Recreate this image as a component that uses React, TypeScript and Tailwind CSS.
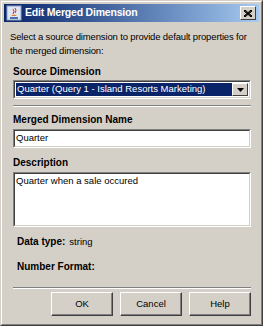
export default function App() {
  return (
    <div className="h-[327px] w-[265px] bg-white font-['Liberation_Sans',Arial,sans-serif] text-black">
      <div className="flex h-[326px] w-[263px] flex-col border border-t-[#d4d0c8] border-l-[#d4d0c8] border-r-[#404040] border-b-[#404040] bg-[#d4d0c8]">
        <div className="flex flex-1 flex-col border border-t-white border-l-white border-r-[#808080] border-b-[#808080] p-[2px]">
          {/* title bar */}
          <div className="flex h-[18px] items-center bg-gradient-to-r from-[#0a246a] to-[#a6caf0] pl-[2px] pr-[2px]">
            <svg width="16" height="16" viewBox="0 0 16 16" className="mr-[3px]">
              <rect x="1" y="1" width="14" height="14" fill="#dfe6f2" stroke="#8da2c4" />
              <path d="M4 12 h8 v2 h-8z" fill="#4a6fb3" />
              <path d="M5 11 q3 -3 6 0z" fill="#e07a2f" />
              <path d="M7 4 q2 2 0 5 M9 3 q2 2 0 5" stroke="#c33" strokeWidth="1" fill="none" />
            </svg>
            <span className="text-[10.5px] font-bold tracking-[-0.2px] text-white">Edit Merged Dimension</span>
            <div className="ml-auto mr-[1px] flex h-[14px] w-[16px] items-center justify-center border border-t-white border-l-white border-r-[#404040] border-b-[#404040] bg-[#d4d0c8]">
              <svg width="8" height="7" viewBox="0 0 8 7">
                <path d="M0 0 L8 7 M8 0 L0 7 M1 0 L8 6 M0 1 L7 7 M7 0 L0 6 M8 1 L1 7" stroke="black" strokeWidth="1" />
              </svg>
            </div>
          </div>

          <div className="flex flex-1 flex-col px-[6px]">
            <p className="mt-[8px] whitespace-nowrap text-[9.5px] leading-[14px] tracking-[-0.15px]">
              Select a source dimension to provide default properties for
              <br />
              the merged dimension:
            </p>

            <div className="ml-[3px] mr-[2px] mt-[8px] flex flex-col">
              <span className="text-[10px] font-bold leading-[12px]">Source Dimension</span>
              <div className="mt-[2px] flex h-[19px] items-stretch border border-t-[#808080] border-l-[#808080] border-r-white border-b-white">
                <div className="flex flex-1 items-stretch border border-t-[#404040] border-l-[#404040] border-r-[#d4d0c8] border-b-[#d4d0c8] bg-white p-[1px]">
                  <div className="flex flex-1 items-center bg-[#0a246a] px-[1px] text-[9.5px] text-white">
                    Quarter (Query 1 - Island Resorts Marketing)
                  </div>
                  <div className="flex w-[16px] items-center justify-center border border-t-white border-l-white border-r-[#404040] border-b-[#404040] bg-[#d4d0c8]">
                    <svg width="7" height="4" viewBox="0 0 7 4">
                      <path d="M0 0 H7 L3.5 4z" fill="black" />
                    </svg>
                  </div>
                </div>
              </div>

              <div className="mt-[6px] border-t border-b border-t-[#808080] border-b-white" />

              <span className="mt-[7px] text-[10px] font-bold leading-[12px]">Merged Dimension Name</span>
              <div className="mt-[3px] flex h-[19px] border border-t-[#808080] border-l-[#808080] border-r-white border-b-white">
                <div className="flex flex-1 items-center border border-t-[#404040] border-l-[#404040] border-r-[#d4d0c8] border-b-[#d4d0c8] bg-white px-[1px] text-[9.5px]">
                  Quarter
                </div>
              </div>

              <span className="mt-[9px] text-[10px] font-bold leading-[12px]">Description</span>
              <div className="mt-[3px] flex h-[55px] border border-t-[#808080] border-l-[#808080] border-r-white border-b-white">
                <div className="flex-1 border border-t-[#404040] border-l-[#404040] border-r-[#d4d0c8] border-b-[#d4d0c8] bg-white px-[1px] pt-[1px] text-[9.5px] leading-[12px]">
                  Quarter when a sale occured
                </div>
              </div>

              <div className="ml-[4px] mt-[9px] flex items-baseline gap-[4px] text-[9.5px] leading-[12px]">
                <span className="text-[10px] font-bold">Data type:</span>
                <span>string</span>
              </div>
              <span className="ml-[4px] mt-[13px] text-[10px] font-bold leading-[12px]">Number Format:</span>

              <div className="mt-[14px] border-t border-b border-t-[#808080] border-b-white" />

              <div className="mt-[3px] flex justify-end gap-[7px]">
                {["OK", "Cancel", "Help"].map((label) => (
                  <button
                    key={label}
                    className="flex h-[24px] w-[62px] items-center justify-center border border-t-white border-l-white border-r-[#404040] border-b-[#404040] bg-[#d4d0c8] text-[9.5px] shadow-[inset_-1px_-1px_0_#808080]"
                  >
                    {label}
                  </button>
                ))}
              </div>
            </div>
          </div>
        </div>
      </div>
    </div>
  );
}
